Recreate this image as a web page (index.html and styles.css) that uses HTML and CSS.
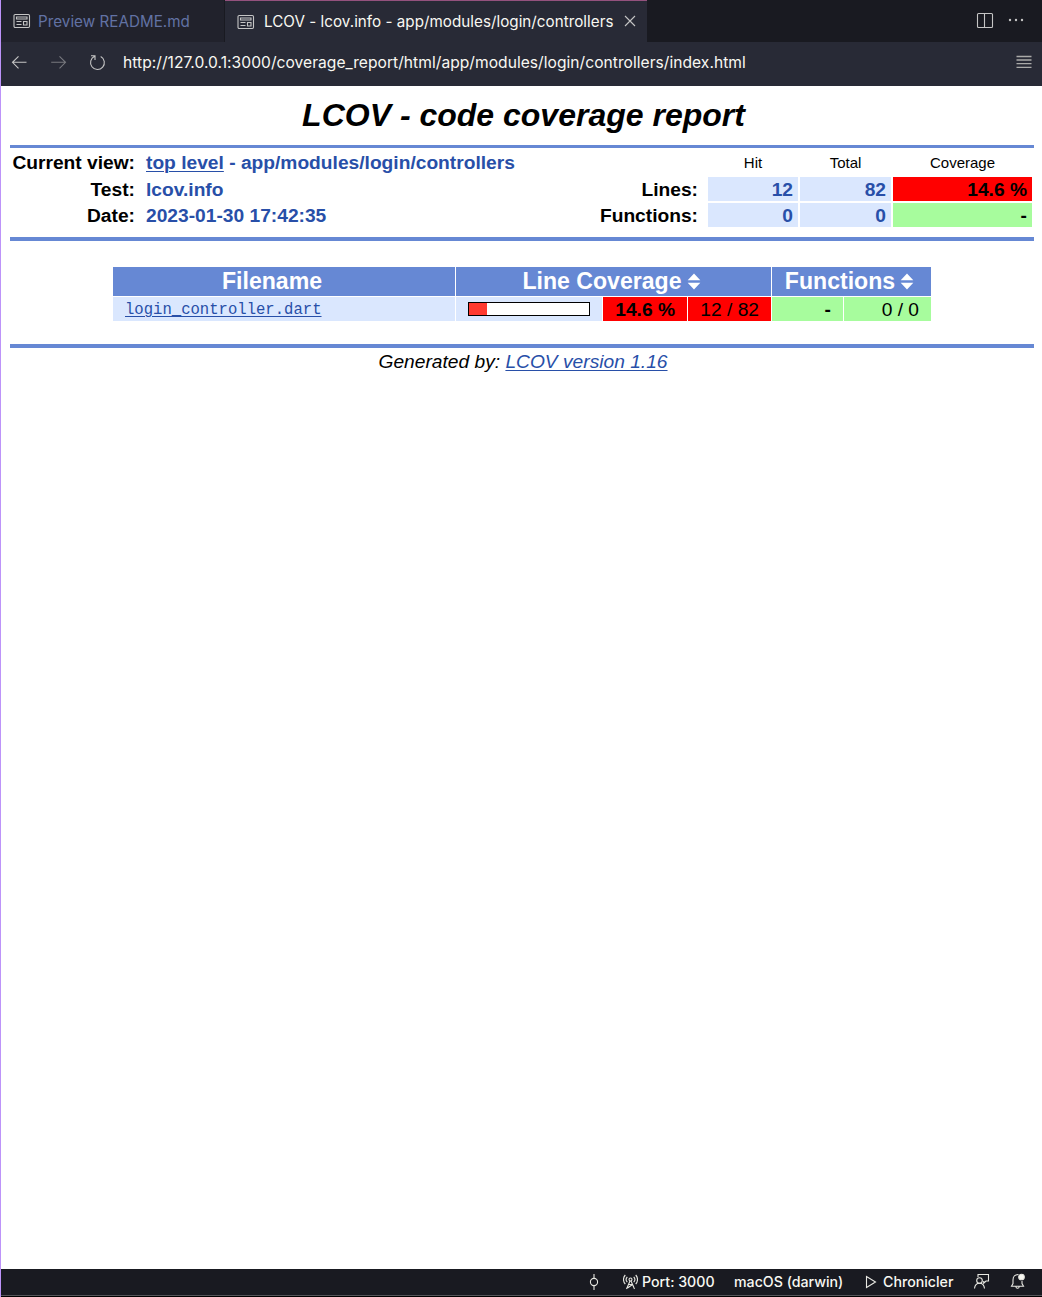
FILE: index.html
```html
<!DOCTYPE html>
<html lang="en">
<head>
<meta charset="utf-8">
<title>LCOV - lcov.info - app/modules/login/controllers</title>
<link rel="stylesheet" href="styles.css">
</head>
<body>
<div class="window">
  <header class="tabs">
    <div class="tab">
      <svg class="icon tab-icon" width="18" height="16" viewBox="0 0 18 16"><rect x="1" y="1.500" width="15.500" height="13" rx="1.200"/><path d="M3.500 4h10.500v2h-10.500zM3.500 8.500h5M3.500 11.500h5M10.500 8.500h3.500v3.500h-3.500z"/></svg>
      <span class="tab-title">Preview README.md</span>
    </div>
    <div class="tab active">
      <svg class="icon tab-icon" width="18" height="16" viewBox="0 0 18 16"><rect x="1" y="1.500" width="15.500" height="13" rx="1.200"/><path d="M3.500 4h10.500v2h-10.500zM3.500 8.500h5M3.500 11.500h5M10.500 8.500h3.500v3.500h-3.500z"/></svg>
      <span class="tab-title">LCOV - lcov.info - app/modules/login/controllers</span>
      <svg class="icon close" width="12" height="12" viewBox="0 0 12 12"><path d="M1 1l10 10M11 1L1 11"/></svg>
    </div>
    <div class="tab-actions">
      <svg class="icon" width="18" height="17" viewBox="0 0 18 17"><rect x="1.500" y="1.500" width="15" height="14" rx="1"/><path d="M8.500 1.500v14"/></svg>
      <svg class="dots" width="16" height="4" viewBox="0 0 16 4"><circle cx="2" cy="2" r="1.200"/><circle cx="8" cy="2" r="1.200"/><circle cx="14" cy="2" r="1.200"/></svg>
    </div>
  </header>
  <nav class="toolbar">
    <svg class="icon" width="16" height="14" viewBox="0 0 16 14"><path d="M15.500 7.300H1.500M7.500 1.300l-6 6 6 6"/></svg>
    <svg class="icon forward" width="16" height="14" viewBox="0 0 16 14"><path d="M.2 7.300H14.500M8.500 1.300l6 6-6 6"/></svg>
    <svg class="icon reload" width="17" height="17" viewBox="0 0 17 17"><path d="M2 1.800h4v4.200M5.600 2.300a6.900 6.900 0 1 0 6.100.2"/></svg>
    <span class="url">http://127.0.0.1:3000/coverage_report/html/app/modules/login/controllers/index.html</span>
    <svg class="menu" width="16" height="14" viewBox="0 0 16 14"><path d="M.5 1.500h15M.5 5h15M.5 8.700h15M.5 12.300h15"/></svg>
  </nav>
  <main class="page">
    <h1 class="title">LCOV - code coverage report</h1>
    <section class="summary">
      <dl class="details">
        <dt>Current view:</dt><dd><a href="#">top level</a> - app/modules/login/controllers</dd>
        <dt>Test:</dt><dd>lcov.info</dd>
        <dt>Date:</dt><dd>2023-01-30 17:42:35</dd>
      </dl>
      <div class="totals">
        <span></span><span class="caption">Hit</span><span class="caption">Total</span><span class="caption">Coverage</span>
        <span class="label">Lines:</span><span class="num">12</span><span class="num">82</span><span class="rate low">14.6 %</span>
        <span class="label">Functions:</span><span class="num">0</span><span class="num">0</span><span class="rate high">-</span>
      </div>
    </section>
    <section class="files">
      <div class="head filename">Filename</div>
      <div class="head span-three"><span>Line Coverage</span><svg class="sort" width="14" height="17" viewBox="0 0 14 17"><path d="M7 .5L13.300 7.300H.7zM.7 9.700h12.600L7 16.500z"/></svg></div>
      <div class="head span-two"><span>Functions</span><svg class="sort" width="14" height="17" viewBox="0 0 14 17"><path d="M7 .5L13.300 7.300H.7zM.7 9.700h12.600L7 16.500z"/></svg></div>
      <div class="cell name"><a href="#">login_controller.dart</a></div>
      <div class="cell bar-cell"><div class="bar"><div class="fill" style="width:15%"></div></div></div>
      <div class="cell low strong">14.6 %</div>
      <div class="cell low">12 / 82</div>
      <div class="cell high strong">-</div>
      <div class="cell high">0 / 0</div>
    </section>
    <footer class="generated">Generated by: <a href="#">LCOV version 1.16</a></footer>
  </main>
  <footer class="status">
    <svg class="icon s-commit" width="12" height="18" viewBox="0 0 12 18"><circle cx="6" cy="9" r="3.600"/><path d="M6 1v4.400M6 12.600V17"/></svg>
    <svg class="icon s-tower" width="15" height="16" viewBox="0 0 15 16"><circle cx="7.500" cy="5.500" r="1.500"/><path d="M7 7L3.500 15M8 7l3.500 8M5.600 10.500h4l1.500 3.500M9.600 10.500L4.500 14M4.300 8.200a4 4 0 0 1 0-5.400M10.700 8.200a4 4 0 0 0 0-5.400M2.300 10a6.500 6.500 0 0 1 0-9M12.700 10a6.500 6.500 0 0 0 0-9"/></svg>
    <span class="s-port">Port: 3000</span>
    <span class="s-os">macOS (darwin)</span>
    <svg class="icon s-play" width="12" height="14" viewBox="0 0 12 14"><path d="M1.500 1.500v11L10.500 7z"/></svg>
    <span class="s-name">Chronicler</span>
    <svg class="icon s-feedback" width="17" height="17" viewBox="0 0 17 17"><path d="M5 4V1.500h10.500v6.500h-2.500l-2.300 2.200V8"/><circle cx="6.500" cy="7.500" r="2.800"/><path d="M1.500 15.500c.3-3 2-5.200 5-5.200s4.700 2.200 5 5.200"/></svg>
    <svg class="icon s-bell" width="16" height="17" viewBox="0 0 16 17"><path d="M8.500 1.500C5 1.500 3 3.500 3 7v3.500l-1.500 2.700h12L12 10.500V8M5.800 13.500c.3 2.400 3.200 2.400 3.500 0"/><circle class="badge" cx="11.500" cy="4" r="2.800"/></svg>
  </footer>
</div>
</body>
</html>
```
FILE: styles.css
```css
* { box-sizing: border-box; }
body { margin: 0; background: #fff; }
svg { display: block; flex: none; }
.window {
  height: 1297px;
  display: flex;
  flex-direction: column;
  border-left: 1px solid #bd93f9;
  font-family: Inter, sans-serif;
  font-size: 15px;
  color: #f8f8f2;
  white-space: nowrap;
}
.icon { fill: none; stroke: #c5c5c5; stroke-width: 1.1; }

.tabs { display: flex; height: 42px; background: #191a21; }
.tab {
  display: flex;
  align-items: center;
  width: 224px;
  padding-left: 12px;
  background: #21222c;
  border-right: 1px solid #191a21;
  color: #6272a4;
}
.tab.active {
  width: 422px;
  background: #282a36;
  border-right: 0;
  border-top: 1px solid #94527e;
  color: #f8f8f2;
}
.tab-title { font-size: 15.2px; letter-spacing: .03px; }
.tab-icon { margin-right: 7px; }
.active .tab-icon { margin-right: 9px; }
.close { position: relative; top: -1px; margin-left: 11px; }
.tab-actions { display: flex; align-items: center; gap: 14px; margin-left: auto; padding: 0 18px 2px 0; }
.dots { fill: #c5c5c5; }

.toolbar { display: flex; align-items: center; height: 44px; padding: 0 10px 4px 10px; background: #282a36; }
.forward { margin-left: 24px; opacity: .5; }
.reload { margin: 0 17px 0 22px; }
.url { font-size: 15.6px; letter-spacing: .03px; }
.menu { margin-left: auto; fill: none; stroke: #aaaaa9; stroke-width: 1.3; }

.page {
  flex: 1;
  padding: 0 8px 0 9px;
  background: #fff;
  color: #000;
  font: 19.2px/24px "Liberation Sans", Arial, sans-serif;
}
.page a { color: #284fa8; text-decoration: underline; text-decoration-thickness: 1px; text-underline-offset: 2px; }
.title {
  height: 59px;
  margin: 0;
  padding-left: 3px;
  text-align: center;
  font: italic bold 32px/58px "Liberation Sans", Arial, sans-serif;
}
.summary {
  display: flex;
  justify-content: space-between;
  height: 96px;
  padding: 3px 2px 0;
  border-top: 3px solid #6688d4;
  border-bottom: 4px solid #6688d4;
  font-weight: bold;
}
.details { display: grid; grid-template: 27px 26px 26px / 123px auto; column-gap: 11px; margin: 0; }
.details dt { text-align: right; }
.details dd { margin: 0; color: #284fa8; }
.totals { display: grid; grid-template: 24px 24px 24px / 110px 90px 91px 139px; gap: 2px; line-height: 26px; }
.caption { text-align: center; font-size: 15px; line-height: 24px; font-weight: normal; }
.label { padding-right: 8px; text-align: right; }
.num { padding-right: 5px; text-align: right; background: #dae7fe; color: #284fa8; }
.rate { padding-right: 5px; text-align: right; }
.low { background: #f00; }
.high { background: #a7fc9d; }

.files {
  display: grid;
  grid-template: 29px 24px / 342px 146px 84px 83px 71px 87px;
  gap: 1px;
  margin: 26px 0 23px 103px;
}
.head {
  display: flex;
  justify-content: center;
  align-items: center;
  padding-bottom: 1px;
  background: #6688d4;
  color: #fff;
  font-size: 23.1px;
  font-weight: bold;
}
.filename { padding-right: 24px; }
.span-three { grid-column: span 3; padding-right: 4px; }
.span-two { grid-column: span 2; padding-right: 4px; }
.sort { margin-left: 5px; fill: #fff; }
.cell { padding: 0 12px; text-align: right; line-height: 26px; }
.name { background: #dae7fe; text-align: left; font: 15.6px/26px "Liberation Mono", monospace; }
.bar-cell { background: #dae7fe; padding-top: 5px; }
.bar { width: 122px; height: 14px; border: 1px solid #000; background: #fff; }
.fill { height: 100%; background: #ff3a30; }
.strong { font-weight: bold; }
.generated { border-top: 4px solid #6688d4; padding: 2px 0 0 2px; text-align: center; font-style: italic; }

.status {
  display: flex;
  align-items: center;
  height: 28px;
  padding: 0 16px 2px 0;
  background: #191a21;
  border-bottom: 1px solid #000;
  box-shadow: inset 0 -1px #55565a;
  font-size: 14.2px;
  font-weight: 500;
}
.status .icon { stroke: #e8e8e2; }
.s-commit { margin-left: 587px; }
.s-tower { margin-left: 23px; }
.s-port { margin-left: 4px; width: 73px; }
.s-os { margin-left: 19px; width: 109px; }
.s-play { margin-left: 22px; }
.s-name { margin-left: 6px; }
.s-feedback { margin-left: auto; margin-right: 20px; }
.status .badge { fill: #f8f8f2; }
```
